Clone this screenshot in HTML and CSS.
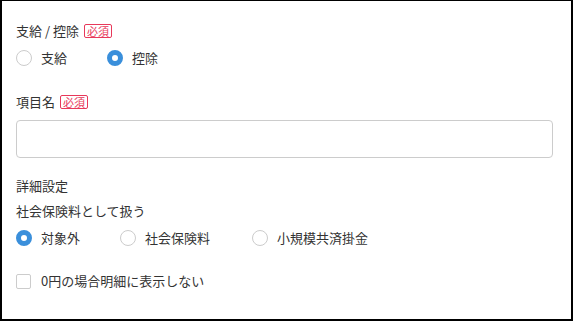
FILE: index.html
```html
<!DOCTYPE html>
<html lang="ja">
<head>
  <meta charset="UTF-8">
  <title>項目設定</title>
  <link rel="stylesheet" href="styles.css">
</head>
<body>
  <div class="frame">
    <!-- 支給 / 控除 -->
    <div class="field">
      <div class="label">支給 / 控除 <span class="required">必須</span></div>
      <div class="radio-row">
        <label class="radio"><span class="dot"></span>支給</label>
        <label class="radio checked"><span class="dot"></span>控除</label>
      </div>
    </div>

    <div class="field field-name">
      <div class="label">項目名 <span class="required">必須</span></div>
      <div class="text-input"></div>
    </div>

    <div class="field field-detail">
      <div class="section-title">詳細設定</div>
      <div class="label sub">社会保険料として扱う</div>
      <div class="radio-row">
        <label class="radio checked w1"><span class="dot"></span>対象外</label>
        <label class="radio w2"><span class="dot"></span>社会保険料</label>
        <label class="radio auto"><span class="dot"></span>小規模共済掛金</label>
      </div>
    </div>

    <label class="checkbox"><span class="box"></span>0円の場合明細に表示しない</label>
  </div>
</body>
</html>
```
FILE: styles.css
```css
* {
  margin: 0;
  padding: 0;
  box-sizing: border-box;
}

body {
  font-family: 'Noto Sans CJK JP', 'Noto Sans', sans-serif;
  font-size: 13px;
  color: #333333;
  background: #ffffff;
}

.frame {
  width: 573px;
  height: 321px;
  border: 2px solid #000000;
  border-top-width: 1px;
  padding: 20px 18px 0 14px;
}

.label {
  display: flex;
  align-items: center;
  gap: 5px;
  height: 20px;
  line-height: 20px;
}

.required {
  display: inline-block;
  font-size: 11px;
  line-height: 12px;
  color: #e8385a;
  border: 1px solid #e8385a;
  border-radius: 2px;
  padding: 0 2px;
}

.radio-row {
  display: flex;
  align-items: center;
  margin-top: 7px;
  height: 20px;
}

.radio {
  display: flex;
  align-items: center;
  gap: 9px;
  width: 91px;
  line-height: 20px;
  white-space: nowrap;
}

.radio.w1 {
  width: 104px;
}

.radio.w2 {
  width: 132px;
}

.radio.auto {
  width: auto;
}

.dot {
  width: 16px;
  height: 16px;
  border-radius: 50%;
  border: 1px solid #cccccc;
  background: #ffffff;
  flex-shrink: 0;
}

.radio.checked .dot {
  border: 5px solid #3a8fdb;
}

.field-name {
  margin-top: 24px;
}

.text-input {
  margin-top: 8px;
  height: 38px;
  border: 1px solid #cccccc;
  border-radius: 4px;
}

.field-detail {
  margin-top: 18px;
}

.section-title {
  height: 20px;
  line-height: 20px;
}

.label.sub {
  margin-top: 5px;
}

.checkbox {
  display: flex;
  align-items: center;
  gap: 10px;
  margin-top: 23px;
  height: 20px;
  line-height: 20px;
}

.box {
  width: 15px;
  height: 15px;
  border: 1px solid #cccccc;
  border-radius: 2px;
  flex-shrink: 0;
}
```
